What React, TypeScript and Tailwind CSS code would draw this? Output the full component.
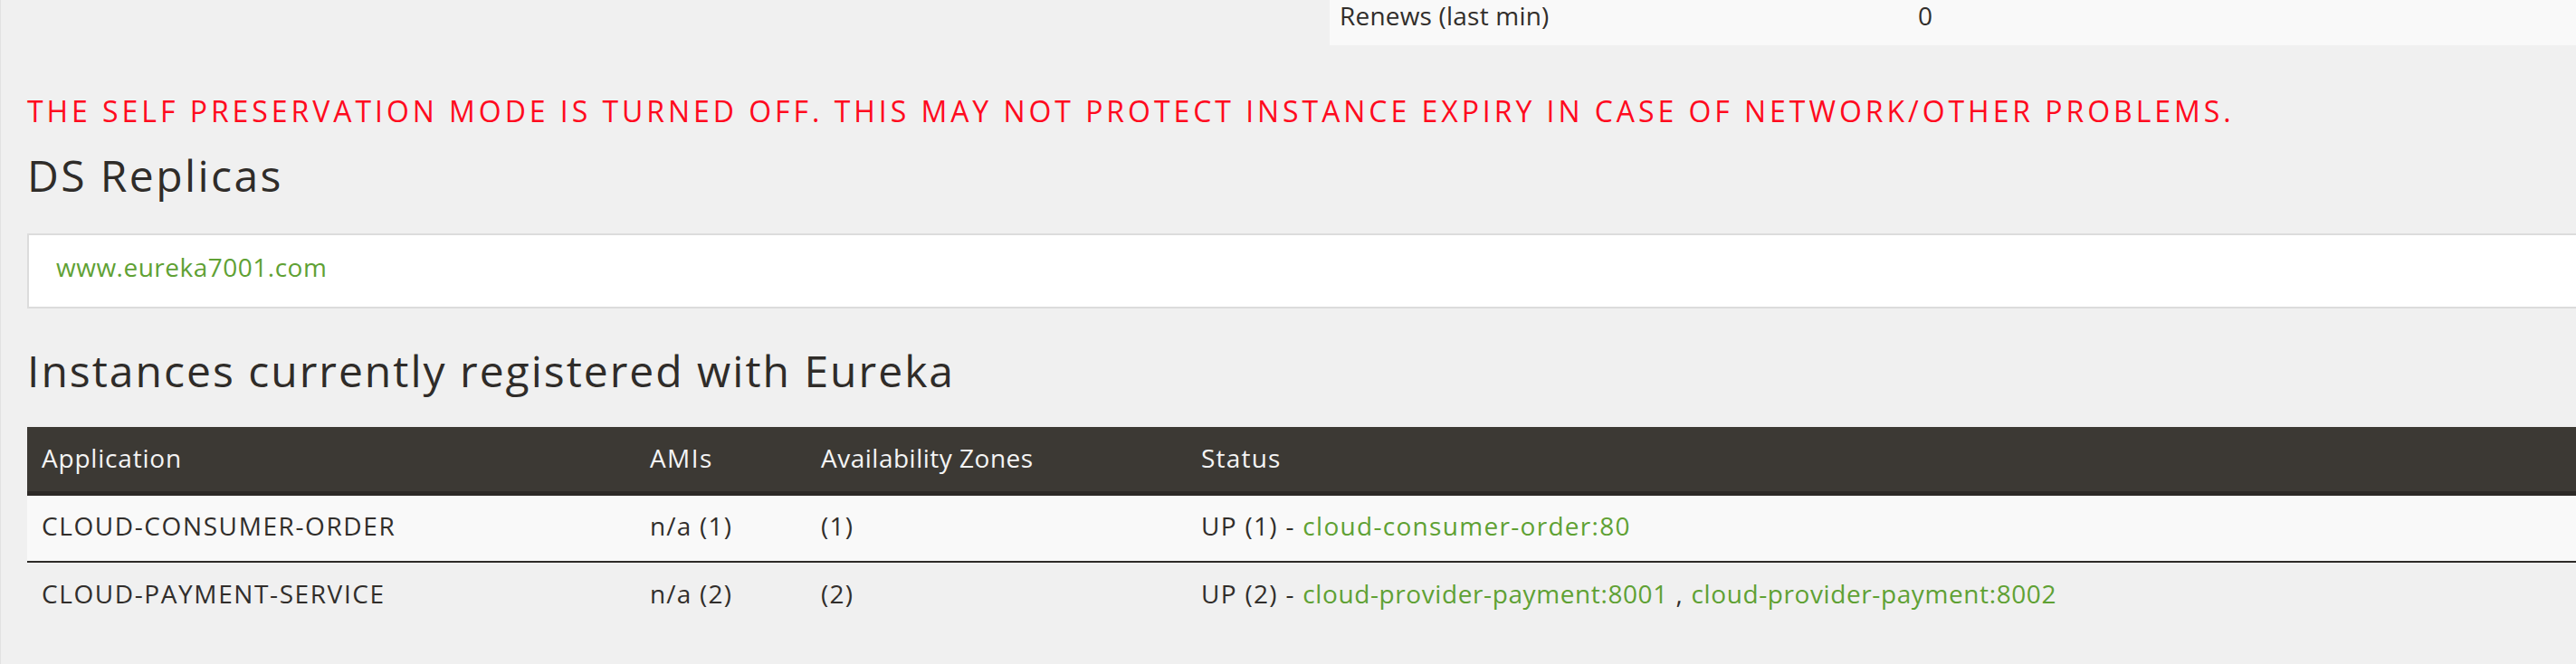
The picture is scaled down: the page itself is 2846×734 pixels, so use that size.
import React from "react";

const font = { fontFamily: '"Open Sans", "Noto Sans", Arial, sans-serif' };

const cols = "grid grid-cols-[672px_189px_420px_1fr]";

function Link({ children, className = "" }: { children: React.ReactNode; className?: string }) {
  return <span className={`text-[#5fa134] ${className}`}>{children}</span>;
}

export default function App() {
  return (
    <div
      className="w-[2846px] h-[734px] overflow-hidden bg-[#f0f0f0] border-l border-[#e2e2e2] text-[#312e2b]"
      style={font}
    >
      {/* Right column: tail of the lease info table */}
      <div className="ml-[1468px] w-[1420px] h-[50px] bg-[#f9f9f9] flex text-[28px] leading-[28px] pt-[3px] tracking-[0.2px]">
        <div className="w-[650px] pl-[11px]">Renews (last min)</div>
        <div>0</div>
      </div>

      <div className="pl-[29px] w-[2880px]">
        <div className="mt-[53px] text-[32px] leading-[40px] text-[#ff0a1e] whitespace-nowrap tracking-[3.95px]">
          THE SELF PRESERVATION MODE IS TURNED OFF. THIS MAY NOT PROTECT INSTANCE EXPIRY IN CASE OF NETWORK/OTHER PROBLEMS.
        </div>

        <h2 className="mt-[23px] text-[48px] leading-[56px] text-[#2f2c29] tracking-[2.4px]">DS Replicas</h2>

        <div className="mt-[36px] h-[83px] bg-white border-2 border-[#dcdcdc] pl-[30px] pt-[15px] text-[28px] leading-[40px] tracking-[0.5px]">
          <Link>www.eureka7001.com</Link>
        </div>

        <h2 className="mt-[41px] text-[48px] leading-[56px] text-[#2f2c29] tracking-[2px]">
          Instances currently registered with Eureka
        </h2>

        <div className="mt-[34px] text-[28px] leading-[40px] tracking-[1.6px]">
          <div className={`${cols} bg-[#3c3934] text-[#f4f4f4] border-b-[5px] border-[#2c2926] h-[76px]`}>
            <div className="pl-[16px] pt-[14px] tracking-[0.8px]">Application</div>
            <div className="pl-[16px] pt-[14px] tracking-[1.4px]">AMIs</div>
            <div className="pl-[16px] pt-[14px] tracking-[0.5px]">Availability Zones</div>
            <div className="pl-[16px] pt-[14px] tracking-[1.2px]">Status</div>
          </div>
          <div className={`${cols} bg-[#f9f9f9] h-[74px] border-b-2 border-[#2e2b28]`}>
            <div className="pl-[16px] pt-[13px]">CLOUD-CONSUMER-ORDER</div>
            <div className="pl-[16px] pt-[13px] tracking-[1.2px]">n/a (1)</div>
            <div className="pl-[16px] pt-[13px] tracking-[1.2px]">(1)</div>
            <div className="pl-[16px] pt-[13px] whitespace-nowrap tracking-[1.3px]">
              UP (1) - <Link>cloud-consumer-order:80</Link>
            </div>
          </div>
          <div className={`${cols} h-[72px]`}>
            <div className="pl-[16px] pt-[14px]">CLOUD-PAYMENT-SERVICE</div>
            <div className="pl-[16px] pt-[14px] tracking-[1.2px]">n/a (2)</div>
            <div className="pl-[16px] pt-[14px] tracking-[1.2px]">(2)</div>
            <div className="pl-[16px] pt-[14px] whitespace-nowrap tracking-[1.3px]">
              UP (2) - <Link className="tracking-[0.6px]">cloud-provider-payment:8001</Link> ,{" "}
              <Link className="tracking-[0.6px]">cloud-provider-payment:8002</Link>
            </div>
          </div>
        </div>
      </div>
    </div>
  );
}
